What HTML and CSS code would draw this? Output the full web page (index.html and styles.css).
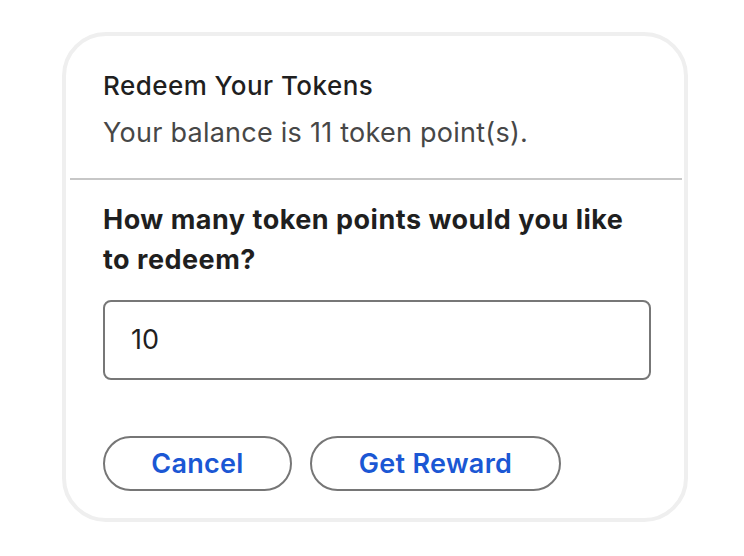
FILE: index.html
```html
<!DOCTYPE html>
<html lang="en">
<head>
<meta charset="utf-8">
<title>Redeem Your Tokens</title>
<link rel="stylesheet" href="styles.css">
</head>
<body>
<div class="card">
  <div class="head">
    <div class="title">Redeem Your Tokens</div>
    <div class="balance">Your balance is 11 token point(s).</div>
  </div>
  <div class="divider"></div>
  <div class="body">
    <div class="question">How many token points would you like to redeem?</div>
    <div class="input">10</div>
    <div class="actions">
      <button class="btn btn-cancel">Cancel</button>
      <button class="btn btn-reward">Get Reward</button>
    </div>
  </div>
</div>
</body>
</html>
```

FILE: styles.css
```css
html, body {
  margin: 0;
  padding: 0;
  background: #ffffff;
}
body {
  font-family: Inter, "Liberation Sans", sans-serif;
  color: #1f1f1f;
  padding: 32px 0 0 62px;
}
.card {
  box-sizing: border-box;
  width: 626px;
  height: 490px;
  border: 4px solid #efefef;
  border-radius: 44px;
  background: #fff;
}
.head {
  padding: 34px 0 29px 37px;
}
.title {
  font-size: 26px;
  font-weight: 500;
  letter-spacing: 0.45px;
  line-height: 32px;
  color: #1f1f1f;
}
.balance {
  margin-top: 15px;
  font-size: 27px;
  letter-spacing: 0.25px;
  line-height: 32px;
  color: #474747;
}
.divider {
  height: 2px;
  background: #c7c7c7;
  margin: 0 2px 0 4px;
}
.body {
  padding: 20px 0 0 37px;
}
.question {
  width: 530px;
  font-size: 27px;
  font-weight: 700;
  letter-spacing: 0.5px;
  line-height: 40px;
  color: #1f1f1f;
}
.input {
  box-sizing: border-box;
  margin-top: 20px;
  width: 548px;
  height: 80px;
  border: 2px solid #777777;
  border-radius: 8px;
  padding-left: 26px;
  font-size: 27px;
  line-height: 76px;
  color: #1f1f1f;
}
.actions {
  display: flex;
  gap: 18px;
  margin-top: 56px;
}
.btn {
  box-sizing: border-box;
  height: 55px;
  border: 2px solid #767676;
  border-radius: 28px;
  background: #fff;
  font-family: Inter, "Liberation Sans", sans-serif;
  font-size: 27px;
  font-weight: 600;
  letter-spacing: 0.3px;
  color: #1b57d4;
  padding: 0;
}
.btn-cancel { width: 189px; }
.btn-reward { width: 251px; }
```
